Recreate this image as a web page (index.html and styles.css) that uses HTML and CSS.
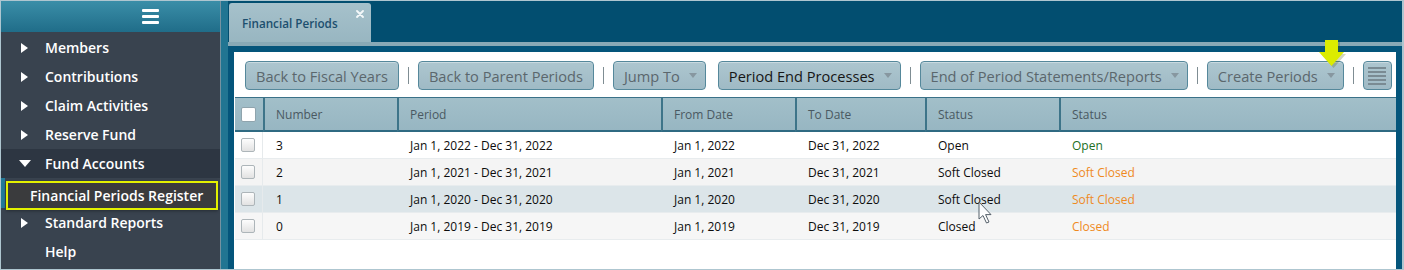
FILE: index.html
```html
<!DOCTYPE html>
<html>
<head>
<meta charset="utf-8">
<title>Financial Periods</title>
<link rel="stylesheet" href="styles.css">
</head>
<body>
<div class="frame">
  <aside class="sidebar">
    <div class="side-head">
      <span class="burger"><i></i><i></i><i></i></span>
    </div>
    <ul class="nav">
      <li class="nav-item"><span class="tri-r"></span>Members</li>
      <li class="nav-item"><span class="tri-r"></span>Contributions</li>
      <li class="nav-item"><span class="tri-r"></span>Claim Activities</li>
      <li class="nav-item"><span class="tri-r"></span>Reserve Fund</li>
      <li class="nav-item open"><span class="tri-d"></span>Fund Accounts</li>
      <li class="nav-sub"><span class="sub-box">Financial Periods Register</span></li>
      <li class="nav-item"><span class="tri-r"></span>Standard Reports</li>
      <li class="nav-item plain">Help</li>
    </ul>
  </aside>
  <div class="strip"></div>
  <main class="main">
    <div class="tabbar">
      <div class="tab">
        <span class="tab-title">Financial Periods</span>
        <svg class="tab-close" width="8" height="8" viewBox="0 0 8 8"><path d="M1 1 L7 7 M7 1 L1 7" stroke="#f4f8fa" stroke-width="1.8" stroke-linecap="round"/></svg>
      </div>
    </div>
    <div class="tabline"></div>
    <section class="panel">
      <div class="toolbar">
        <button class="btn dis">Back to Fiscal Years</button>
        <span class="sep"></span>
        <button class="btn dis">Back to Parent Periods</button>
        <span class="sep"></span>
        <button class="btn dis dd">Jump To<span class="caret"></span></button>
        <button class="btn act dd gap">Period End Processes<span class="caret"></span></button>
        <span class="sep"></span>
        <button class="btn dis dd">End of Period Statements/Reports<span class="caret"></span></button>
        <span class="sep"></span>
        <button class="btn dis dd">Create Periods<span class="caret"></span></button>
        <span class="sep"></span>
        <button class="btn icon">
          <svg width="18" height="18" viewBox="0 0 18 18"><path d="M0 1 H18 M0 5 H18 M0 9 H18 M0 13 H18 M0 17 H18" stroke="#7a8b93" stroke-width="2"/></svg>
        </button>
      </div>
      <table class="grid">
        <thead>
          <tr>
            <th class="c-cb"><span class="chk hdr"></span></th>
            <th class="c-num">Number</th>
            <th class="c-per">Period</th>
            <th class="c-from">From Date</th>
            <th class="c-to">To Date</th>
            <th class="c-st">Status</th>
            <th class="c-st2">Status</th>
          </tr>
        </thead>
        <tbody>
          <tr class="r1">
            <td class="cb"><span class="chk"></span></td>
            <td>3</td><td>Jan 1, 2022 - Dec 31, 2022</td><td>Jan 1, 2022</td><td>Dec 31, 2022</td><td>Open</td><td class="open">Open</td>
          </tr>
          <tr class="r2">
            <td class="cb"><span class="chk"></span></td>
            <td>2</td><td>Jan 1, 2021 - Dec 31, 2021</td><td>Jan 1, 2021</td><td>Dec 31, 2021</td><td>Soft Closed</td><td class="closed">Soft Closed</td>
          </tr>
          <tr class="r3">
            <td class="cb"><span class="chk"></span></td>
            <td>1</td><td>Jan 1, 2020 - Dec 31, 2020</td><td>Jan 1, 2020</td><td>Dec 31, 2020</td><td>Soft Closed</td><td class="closed">Soft Closed</td>
          </tr>
          <tr class="r4">
            <td class="cb"><span class="chk"></span></td>
            <td>0</td><td>Jan 1, 2019 - Dec 31, 2019</td><td>Jan 1, 2019</td><td>Dec 31, 2019</td><td>Closed</td><td class="closed">Closed</td>
          </tr>
        </tbody>
      </table>
    </section>
  </main>

  <svg class="hint-arrow" width="30" height="28" viewBox="0 0 30 28">
    <polygon points="10,1 23,1 23,13 29,13 16.5,27 4,13 10,13" fill="rgba(80,90,0,0.25)" transform="translate(1,1)"/>
    <polygon points="9,0 22,0 22,12 28,12 15.5,26 3,12 9,12" fill="#dcec00"/>
  </svg>
  <svg class="cursor" width="16" height="24" viewBox="0 0 16 24">
    <path d="M1 1 L1 18 L5 14.5 L8.5 22 L11 21 L7.6 13.6 L13 13.6 Z" fill="#ffffff" fill-opacity="0.85" stroke="#55606a" stroke-width="1" stroke-linejoin="round"/>
  </svg>
</div>
</body>
</html>
```

FILE: styles.css
```css
* { box-sizing: border-box; }

html, body {
  margin: 0;
  padding: 0;
}

body {
  width: 1404px;
  height: 270px;
  overflow: hidden;
  background: #ffffff;
  font-family: "Open Sans", "Noto Sans", "Liberation Sans", sans-serif;
}

.frame {
  position: relative;
  display: flex;
  width: 1404px;
  height: 270px;
  border: 1px solid #aec6d0;
  border-right-width: 2px;
  overflow: hidden;
  background: #39434f;
}

/* ---------- sidebar ---------- */
.sidebar {
  width: 220px;
  flex: none;
  display: flex;
  flex-direction: column;
  background: #39434f;
  border-right: 1px solid #7592a1;
}

.side-head {
  height: 31px;
  flex: none;
  display: flex;
  align-items: center;
  justify-content: center;
  padding-left: 80px;
  background: linear-gradient(#3a8ea8, #206d89);
}

.burger {
  display: flex;
  flex-direction: column;
  gap: 3px;
  width: 17px;
}
.burger i {
  display: block;
  height: 3px;
  background: #ffffff;
  border-radius: 1px;
}

.nav {
  list-style: none;
  margin: 0;
  padding: 1px 0 0 0;
}

.nav-item {
  height: 29px;
  display: flex;
  align-items: center;
  padding-left: 20px;
  color: #ffffff;
  font-size: 14px;
  font-weight: 600;
  white-space: nowrap;
}
.nav-item.open { background: #2d3642; }
.nav-item.plain { padding-left: 44px; }

.tri-r {
  width: 0;
  height: 0;
  border-left: 7px solid #ffffff;
  border-top: 5.5px solid transparent;
  border-bottom: 5.5px solid transparent;
  margin-right: 17px;
}
.tri-d {
  width: 0;
  height: 0;
  border-top: 7px solid #ffffff;
  border-left: 6px solid transparent;
  border-right: 6px solid transparent;
  margin-left: -2px;
  margin-right: 14px;
}

.nav-sub {
  height: 30px;
  padding: 3px 2px 0 1px;
  border-left: 4px solid #237a98;
}
.sub-box {
  display: flex;
  align-items: center;
  height: 29px;
  padding-left: 22px;
  border: 2px solid #e3f100;
  background: #3a3b3d;
  box-shadow: 0 1px 3px rgba(0,0,0,0.35);
  color: #ffffff;
  font-size: 14px;
  font-weight: 600;
  white-space: nowrap;
}

.strip {
  width: 7px;
  flex: none;
  background: #217592;
}

/* ---------- main ---------- */
.main {
  flex: 1;
  min-width: 0;
  display: flex;
  flex-direction: column;
  background: #024e70;
}

.tabbar {
  height: 41px;
  flex: none;
  display: flex;
  padding: 2px 0 0 1px;
}

.tab {
  width: 142px;
  height: 39px;
  display: flex;
  align-items: center;
  padding-left: 13px;
  border-radius: 3px 3px 0 0;
  background: linear-gradient(#a6c1cb, #98b6c1);
}
.tab-title {
  color: #1c4f6e;
  font-size: 11.7px;
  font-weight: 600;
  white-space: nowrap;
}
.tab-close {
  align-self: flex-start;
  margin: 7px 7px 0 auto;
}

.tabline {
  height: 4px;
  flex: none;
  background: #88a9b6;
}

.panel {
  flex: 1;
  border: 6px solid #04557b;
  border-bottom: 0;
  background: #ffffff;
}

/* ---------- toolbar ---------- */
.toolbar {
  display: flex;
  align-items: center;
  padding: 9px 0 0 11px;
}

.btn {
  flex: none;
  height: 29px;
  display: flex;
  align-items: center;
  padding: 0 10px;
  margin: 0;
  border: 1px solid #55889b;
  border-radius: 4px;
  background: linear-gradient(#adc6cf, #9fbac5);
  box-shadow: inset 0 1px 0 rgba(255,255,255,0.35);
  font-family: "Open Sans", "Noto Sans", sans-serif;
  font-size: 14.6px;
  font-weight: 400;
  color: #5b676d;
  white-space: nowrap;
}
.btn.act { color: #161616; }
.btn.dd { padding-left: 10px; padding-right: 8px; }
.btn.gap { margin-left: 12px; }
.btn.icon {
  width: 29px;
  padding: 0;
  justify-content: center;
}

.caret {
  width: 0;
  height: 0;
  margin-left: 9px;
  border-top: 5px solid #8797a0;
  border-left: 4px solid transparent;
  border-right: 4px solid transparent;
}

.sep {
  flex: none;
  width: 1px;
  height: 17px;
  margin: 0 9px;
  background: #7f8d93;
}

/* ---------- grid ---------- */
.grid {
  width: 1161px;
  margin: 7px 0 0 1px;
  table-layout: fixed;
  border-collapse: separate;
  border-spacing: 0;
  font-size: 12px;
}

.grid th {
  height: 35px;
  padding: 0 0 0 11px;
  text-align: left;
  font-weight: 400;
  color: #4a5962;
  background: linear-gradient(#a2bfc9, #97b6c2);
  border-top: 1px solid #3a7188;
  border-bottom: 2px solid #2f6a82;
  border-left: 2px solid #3d7489;
  white-space: nowrap;
}
.grid th.c-cb { border-left: 0; padding-left: 6px; }

.c-cb { width: 28px; }
.c-num { width: 134px; }
.c-per { width: 264px; }
.c-from { width: 134px; }
.c-to { width: 130px; }
.c-st { width: 134px; }

.grid td {
  height: 27px;
  padding: 0 0 0 13px;
  color: #0c0c0c;
  font-weight: 500;
  border-bottom: 1px solid #e8ecee;
  white-space: nowrap;
}
.grid td.cb {
  padding-left: 6px;
  border-right: 1px solid #e6eaec;
}

.r1 td { background: #ffffff; }
.r2 td { background: #f4f4f4; }
.r3 td { background: #dce5e9; }
.r4 td { background: #f6f6f6; }

.grid td.open { color: #22701f; }
.grid td.closed { color: #ef8a1e; }

.chk {
  display: block;
  width: 14px;
  height: 14px;
  border: 1px solid #adb5b9;
  border-radius: 2px;
  background: linear-gradient(#fdfdfd, #e2e2e2);
}
.chk.hdr {
  width: 15px;
  height: 15px;
  border-color: #8fa4ad;
  background: #ffffff;
}

/* ---------- overlays ---------- */
.hint-arrow {
  position: absolute;
  left: 1315px;
  top: 39px;
}
.cursor {
  position: absolute;
  left: 977px;
  top: 200px;
}
```
